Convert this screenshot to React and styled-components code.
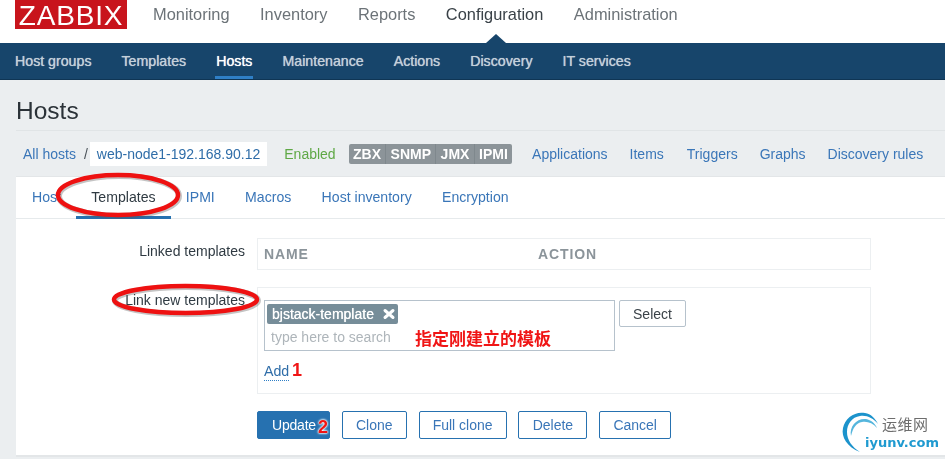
import React from 'react'
import styled, { createGlobalStyle } from 'styled-components'

const GlobalStyle = createGlobalStyle`
  html, body {
    margin: 0;
    height: 459px;
    overflow: hidden;
    background: #ebeef0;
  }
  body {
    font-family: 'Liberation Sans', Arial, sans-serif;
    font-size: 14px;
    color: #2f3a42;
  }
`

const Page = styled.div`
  position: relative;
  width: 945px;
  height: 459px;
  overflow: hidden;
  filter: blur(0.35px);
`

const TopBar = styled.header`
  height: 43px;
  background: #fff;
  display: flex;
  align-items: flex-start;
  padding-left: 15px;
`

const Logo = styled.div`
  width: 112px;
  height: 29px;
  background: #c8141c;
  color: #fff;
  font-size: 28px;
  line-height: 32px;
  letter-spacing: 0.8px;
  text-align: center;
  margin-right: 26px;
`

const MainNav = styled.nav`
  display: flex;
  gap: 30.5px;
  height: 29px;
  align-items: center;
`

const MainItem = styled.span`
  font-size: 16.4px;
  color: ${props => (props.$active ? '#3a4248' : '#6c7378')};
`

const SubBar = styled.nav`
  position: relative;
  height: 37px;
  background: #17456b;
  display: flex;
  gap: 30px;
  padding-left: 15px;
  box-sizing: border-box;
  border-bottom: 1px solid #0f3554;
`

const Notch = styled.div`
  position: absolute;
  left: 486px;
  top: -9px;
  width: 0;
  height: 0;
  border-left: 10px solid transparent;
  border-right: 10px solid transparent;
  border-bottom: 9px solid #17456b;
`

const SubItem = styled.span`
  font-size: 14.2px;
  line-height: 36px;
  height: 36px;
  box-sizing: border-box;
  color: ${props => (props.$active ? '#fff' : '#c4d0da')};
  text-shadow: 0 0 0.7px currentColor;
  padding: ${props => (props.$active ? '0 1px' : '0')};
  margin: ${props => (props.$active ? '0 -1px' : '0')};
  box-shadow: ${props => (props.$active ? 'inset 0 -3px 0 #2f7fc6' : 'none')};
`

const Content = styled.main`
  padding: 0 0 0 16px;
`

const Title = styled.h1`
  margin: 0;
  height: 51px;
  box-sizing: border-box;
  border-bottom: 1px solid #e0e4e6;
  font-size: 24.5px;
  font-weight: 400;
  line-height: 61px;
  color: #2b3238;
`

const Crumbs = styled.div`
  display: flex;
  align-items: center;
  height: 45px;
  padding-left: 7px;
  color: #4a5258;
`

const HostLink = styled.a`
  color: #3a76b8;
  font-size: 14px;
  margin-left: ${props => props.$gap || 0}px;
`

const Slash = styled.span`
  margin: 0 2px 0 8px;
  font-size: 14px;
`

const CurrentHost = styled.span`
  background: #fff;
  color: #2f6da8;
  height: 24px;
  line-height: 24px;
  padding: 0 7px;
  font-size: 14px;
`

const Status = styled.span`
  color: #5fa846;
  font-size: 14px;
  margin: 0 13px 0 17px;
`

const Badges = styled.div`
  display: flex;
  height: 20px;
  border-radius: 2px;
  overflow: hidden;
  background: #8c9499;
`

const Badge = styled.span`
  color: #fff;
  font-size: 14px;
  font-weight: 700;
  line-height: 20px;
  padding: 0 4.3px;
  border-left: ${props => (props.$first ? 'none' : '1px solid #7f888d')};
`

const Panel = styled.section`
  background: #fff;
  height: 281px;
  box-sizing: border-box;
  border-bottom: 2px solid #e3e6e8;
  border-top: 1px solid #e3e6e8;
`

const Tabs = styled.div`
  display: flex;
  height: 42px;
  box-sizing: border-box;
  padding-left: 16px;
  gap: 30.3px;
  border-bottom: 1px solid #e6eaec;
`

const Tab = styled.a`
  height: 42px;
  box-sizing: border-box;
  line-height: 41px;
  font-size: 14.1px;
  color: ${props => (props.$active ? '#2f3a42' : '#3a76b8')};
  padding: ${props => (props.$active ? '0 15px' : '0')};
  margin: ${props => (props.$active ? '0 -15px' : '0')};
  border-bottom: ${props => (props.$active ? '3px solid #2671b0' : 'none')};
`

const Form = styled.div`
  display: grid;
  grid-template-columns: 229px 614px;
  column-gap: 12px;
  row-gap: 17px;
  padding-top: 19px;
`

const Label = styled.label`
  text-align: right;
  font-size: 14px;
  line-height: 26px;
  color: #2f3a42;
`

const BoxedField = styled.div`
  border: 1px solid #eceff1;
  box-sizing: border-box;
  padding: ${props => props.$padding};
`

const TableHead = styled.div`
  display: grid;
  grid-template-columns: 274px 1fr;
  height: 30px;
  padding-left: 6px;
  line-height: 30px;
  font-size: 14px;
  font-weight: 700;
  letter-spacing: 0.9px;
  color: #8b949a;
`

const PickerRow = styled.div`
  display: flex;
  gap: 4px;
  align-items: flex-start;
`

const Multiselect = styled.div`
  width: 351px;
  height: 51px;
  box-sizing: border-box;
  border: 1px solid #b6c2cc;
  padding: 3px 2px;
`

const Chip = styled.span`
  display: flex;
  align-items: center;
  justify-content: space-between;
  width: 131px;
  height: 20px;
  box-sizing: border-box;
  padding: 0 2px 0 5px;
  background: #768d99;
  border-radius: 2px;
  color: #fff;
  font-size: 14px;
  text-shadow: 0 0 0.7px #fff;
`

const Placeholder = styled.div`
  margin: 5px 0 0 4px;
  font-size: 14px;
  line-height: 16px;
  color: #aeb5ba;
`

const AddLink = styled.a`
  display: inline-block;
  margin-top: 12px;
  color: #2f6da8;
  font-size: 14.2px;
  line-height: 17px;
  border-bottom: 1px dotted #2f7fc6;
`

const Buttons = styled.div`
  grid-column: 2;
  display: flex;
  gap: 11.8px;
`

const Button = styled.button`
  width: ${props => props.$width}px;
  height: ${props => (props.$small ? 27 : 28)}px;
  padding: 0;
  box-sizing: border-box;
  border-radius: 2px;
  font-family: inherit;
  font-size: 14px;
  border: 1px solid ${props => (props.$plain ? '#b6c2cc' : '#2671b0')};
  background: ${props => (props.$primary ? '#2671b0' : '#fff')};
  color: ${props => (props.$primary ? '#fff' : props.$plain ? '#3a4248' : '#3a76b8')};
  text-align: ${props => (props.$primary ? 'left' : 'center')};
  padding-left: ${props => (props.$primary ? 14 : 0)}px;
  letter-spacing: ${props => (props.$primary ? '-0.2px' : 0)};
`

const Ring = styled.svg`
  position: absolute;
  left: ${props => props.$left}px;
  top: ${props => props.$top}px;
  overflow: visible;
`

const Note = styled.span`
  position: absolute;
  left: ${props => props.$left}px;
  top: ${props => props.$top}px;
  color: #f01515;
  font-family: ${props => (props.$digit ? "'Liberation Sans'" : "'Noto Sans CJK SC'")}, sans-serif;
  font-size: ${props => props.$size}px;
  font-weight: 700;
  line-height: 1;
  text-shadow: 0 0 2px #fff, 0 0 2px #fff, 0 0 3px #fff;
`

const Watermark = styled.div`
  position: absolute;
  left: 841px;
  top: 411px;
  width: 104px;
  height: 42px;
`

const WatermarkCn = styled.span`
  position: absolute;
  left: 41px;
  top: 5px;
  font-family: 'Noto Sans CJK SC', sans-serif;
  font-size: 15px;
  line-height: 1.1;
  letter-spacing: 0.5px;
  color: #6d6d6d;
`

const WatermarkEn = styled.span`
  position: absolute;
  left: 24px;
  top: 24px;
  font-family: 'DejaVu Sans', sans-serif;
  font-size: 13px;
  font-weight: 700;
  line-height: 1.2;
  color: #1f9ad0;
`

const mainItems = ['Monitoring', 'Inventory', 'Reports', 'Configuration', 'Administration']
const subItems = ['Host groups', 'Templates', 'Hosts', 'Maintenance', 'Actions', 'Discovery', 'IT services']
const hostLinks = [
  ['Applications', 20],
  ['Items', 22],
  ['Triggers', 23],
  ['Graphs', 22],
  ['Discovery rules', 22],
]
const tabs = ['Host', 'Templates', 'IPMI', 'Macros', 'Host inventory', 'Encryption']

const RedEllipse = ({ left, top, width, height }) => (
  <Ring $left={left} $top={top} width={width} height={height} viewBox={`0 0 ${width} ${height}`}>
    <ellipse
      cx={width / 2 + 1}
      cy={height / 2 + 1}
      rx={width / 2 - 2}
      ry={height / 2 - 2}
      fill="none"
      stroke="#555"
      strokeOpacity="0.35"
      strokeWidth="6"
    />
    <ellipse
      cx={width / 2}
      cy={height / 2}
      rx={width / 2 - 2}
      ry={height / 2 - 2}
      fill="none"
      stroke="#ee1111"
      strokeWidth="4.5"
    />
  </Ring>
)

export default function App() {
  return (
    <Page>
      <GlobalStyle />
      <TopBar>
        <Logo>ZABBIX</Logo>
        <MainNav>
          {mainItems.map(item => (
            <MainItem key={item} $active={item === 'Configuration'}>{item}</MainItem>
          ))}
        </MainNav>
      </TopBar>
      <SubBar>
        <Notch />
        {subItems.map(item => (
          <SubItem key={item} $active={item === 'Hosts'}>{item}</SubItem>
        ))}
      </SubBar>
      <Content>
        <Title>Hosts</Title>
        <Crumbs>
          <HostLink>All hosts</HostLink>
          <Slash>/</Slash>
          <CurrentHost>web-node1-192.168.90.12</CurrentHost>
          <Status>Enabled</Status>
          <Badges>
            <Badge $first>ZBX</Badge>
            <Badge>SNMP</Badge>
            <Badge>JMX</Badge>
            <Badge>IPMI</Badge>
          </Badges>
          {hostLinks.map(([name, gap]) => (
            <HostLink key={name} $gap={gap}>{name}</HostLink>
          ))}
        </Crumbs>
        <Panel>
          <Tabs>
            {tabs.map(tab => (
              <Tab key={tab} $active={tab === 'Templates'}>{tab}</Tab>
            ))}
          </Tabs>
          <Form>
            <Label>Linked templates</Label>
            <BoxedField>
              <TableHead>
                <span>NAME</span>
                <span>ACTION</span>
              </TableHead>
            </BoxedField>
            <Label>Link new templates</Label>
            <BoxedField $padding="12px 6px 12px">
              <PickerRow>
                <Multiselect>
                  <Chip>
                    bjstack-template
                    <svg width="14" height="12" viewBox="0 0 14 12">
                      <path d="M3 2.5l8 7M11 2.5l-8 7" stroke="#fff" strokeWidth="3" strokeLinecap="round" />
                    </svg>
                  </Chip>
                  <Placeholder>type here to search</Placeholder>
                </Multiselect>
                <Button $plain $small $width={67}>Select</Button>
              </PickerRow>
              <AddLink>Add</AddLink>
            </BoxedField>
            <Buttons>
              <Button $primary $width={73}>Update</Button>
              <Button $width={65}>Clone</Button>
              <Button $width={88}>Full clone</Button>
              <Button $width={69}>Delete</Button>
              <Button $width={72}>Cancel</Button>
            </Buttons>
          </Form>
        </Panel>
      </Content>

      <RedEllipse left={56} top={173} width={124} height={44} />
      <RedEllipse left={112} top={284} width={147} height={31} />
      <Note $left={415} $top={329} $size={17}>指定刚建立的模板</Note>
      <Note $digit $left={292} $top={361} $size={18}>1</Note>
      <Note $digit $left={318} $top={418} $size={18}>2</Note>

      <Watermark>
        <svg width="42" height="42" viewBox="0 0 42 42">
          <path
            d="M19 41C6 36 0 26 2 17C4 7 14 0 24 2C30 3 34 7 37 13C32 7 26 4 19 5C11 6 6 13 6 21C6 29 11 36 19 41Z"
            fill="#1c93cc"
          />
          <path
            d="M10 25C8 15 16 7 25 8C30 9 34 12 36 17C32 12 26 10 21 11C15 12 12 17 10 25Z"
            fill="#55b6dd"
          />
        </svg>
        <WatermarkCn>运维网</WatermarkCn>
        <WatermarkEn>iyunv.com</WatermarkEn>
      </Watermark>
    </Page>
  )
}
